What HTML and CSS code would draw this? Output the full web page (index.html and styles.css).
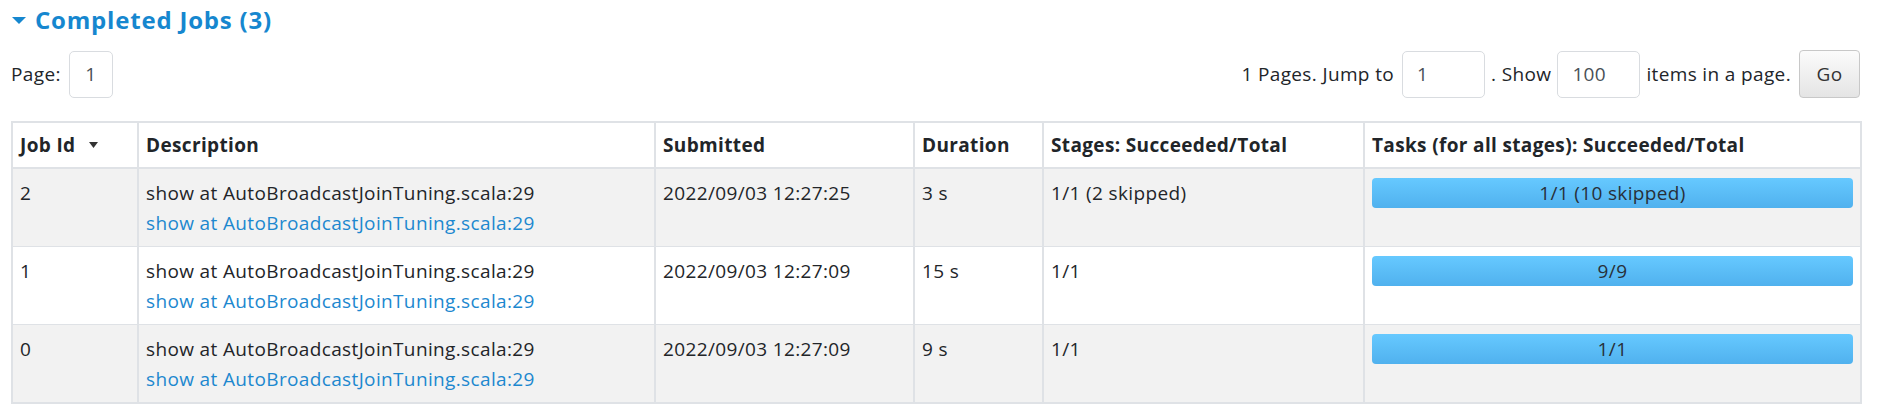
FILE: index.html
```html
<!DOCTYPE html>
<html>
<head>
<meta charset="utf-8">
<title>Completed Jobs</title>
<link rel="stylesheet" href="styles.css">
</head>
<body>
<div class="page">
  <h4 class="title">
    <svg class="caret" width="14" height="8" viewBox="0 0 14 8"><polygon points="0,0 14,0 7,7" fill="#1687cf"/></svg>
    <span>Completed Jobs (3)</span>
  </h4>
  <div class="pager">
    <div class="pager-group">
      <span>Page:</span>
      <span class="box box-page">1</span>
    </div>
    <div class="pager-group">
      <span>1 Pages. Jump to</span>
      <span class="box box-wide">1</span>
      <span>. Show</span>
      <span class="box box-wide">100</span>
      <span>items in a page.</span>
      <span class="btn">Go</span>
    </div>
  </div>
  <table class="jobs">
    <colgroup>
      <col class="c1"><col class="c2"><col class="c3"><col class="c4"><col class="c5"><col class="c6">
    </colgroup>
    <thead>
      <tr>
        <th>Job Id <svg class="sort" width="9" height="6" viewBox="0 0 9 6"><polygon points="0,0 9,0 4.5,6" fill="#333"/></svg></th>
        <th>Description</th>
        <th>Submitted</th>
        <th>Duration</th>
        <th>Stages: Succeeded/Total</th>
        <th>Tasks (for all stages): Succeeded/Total</th>
      </tr>
    </thead>
    <tbody>
      <tr class="odd">
        <td>2</td>
        <td><div>show at AutoBroadcastJoinTuning.scala:29</div><a class="link">show at AutoBroadcastJoinTuning.scala:29</a></td>
        <td>2022/09/03 12:27:25</td>
        <td>3 s</td>
        <td>1/1 (2 skipped)</td>
        <td class="prog-cell"><div class="bar">1/1 (10 skipped)</div></td>
      </tr>
      <tr>
        <td>1</td>
        <td><div>show at AutoBroadcastJoinTuning.scala:29</div><a class="link">show at AutoBroadcastJoinTuning.scala:29</a></td>
        <td>2022/09/03 12:27:09</td>
        <td>15 s</td>
        <td>1/1</td>
        <td class="prog-cell"><div class="bar">9/9</div></td>
      </tr>
      <tr class="odd">
        <td>0</td>
        <td><div>show at AutoBroadcastJoinTuning.scala:29</div><a class="link">show at AutoBroadcastJoinTuning.scala:29</a></td>
        <td>2022/09/03 12:27:09</td>
        <td>9 s</td>
        <td>1/1</td>
        <td class="prog-cell"><div class="bar">1/1</div></td>
      </tr>
    </tbody>
  </table>
</div>
</body>
</html>
```
FILE: styles.css
```css
html, body {
  margin: 0;
  padding: 0;
  background: #ffffff;
}
body {
  font-family: "Open Sans", "Noto Sans", sans-serif;
  font-size: 19px;
  letter-spacing: 0.36px;
  color: #222529;
}
.page {
  padding: 4px 18px 0 11px;
}
.title {
  margin: 0;
  height: 32px;
  display: flex;
  align-items: center;
  gap: 9px;
  font-size: 24px;
  letter-spacing: 0.8px;
  font-weight: 700;
  color: #1687cf;
  line-height: 32px;
}
.caret {
  margin-left: 1px;
  margin-top: 2px;
}
.pager {
  margin-top: 14px;
  height: 48px;
  display: flex;
  justify-content: space-between;
  align-items: center;
}
.pager-group {
  display: flex;
  align-items: center;
  gap: 6px;
}
.pager-group > span:first-child {
  margin-right: 2px;
}
.box {
  box-sizing: border-box;
  height: 47px;
  border: 1px solid #d9dce0;
  border-radius: 5px;
  display: flex;
  align-items: center;
  color: #495057;
  background: #fff;
}
.box-page {
  width: 44px;
  justify-content: center;
}
.box-wide {
  width: 83px;
  padding-left: 14px;
}
.btn {
  box-sizing: border-box;
  width: 61px;
  height: 48px;
  margin-left: 2px;
  display: flex;
  align-items: center;
  justify-content: center;
  border: 1px solid #c8c8c8;
  border-radius: 4px;
  background: linear-gradient(to bottom, #fbfbfb, #e4e4e4);
  color: #333;
}
.jobs {
  margin-top: 23px;
  width: 1849px;
  table-layout: fixed;
  border-collapse: collapse;
  border: 2px solid #dfe2e6;
}
.c1 { width: 126px; }
.c2 { width: 517px; }
.c3 { width: 259px; }
.c4 { width: 129px; }
.c5 { width: 321px; }
.c6 { width: 497px; }
.jobs th, .jobs td {
  text-align: left;
  vertical-align: top;
  padding: 9px 7px 8px 7px;
  line-height: 30px;
  border-left: 2px solid #dfe2e6;
  border-right: 2px solid #dfe2e6;
  border-top: 1px solid #dfe2e6;
  white-space: nowrap;
}
.jobs th {
  font-weight: 700;
  letter-spacing: 0.35px;
  color: #212529;
  border-bottom: 2px solid #dfe2e6;
  padding-top: 7px;
  padding-bottom: 7px;
}
.sort {
  margin-left: 8px;
  vertical-align: middle;
  position: relative;
  top: -2px;
}
.jobs tr.odd td {
  background: #f2f2f2;
}
.link {
  display: block;
  color: #1d88cf;
  text-decoration: none;
}
.prog-cell {
  padding-top: 6px;
  padding-right: 5px;
}
.bar {
  height: 30px;
  line-height: 30px;
  border-radius: 4px;
  text-align: center;
  background: linear-gradient(to bottom, #66c9ff, #50b1ee);
  color: #283039;
  font-size: 19px;
}
```
